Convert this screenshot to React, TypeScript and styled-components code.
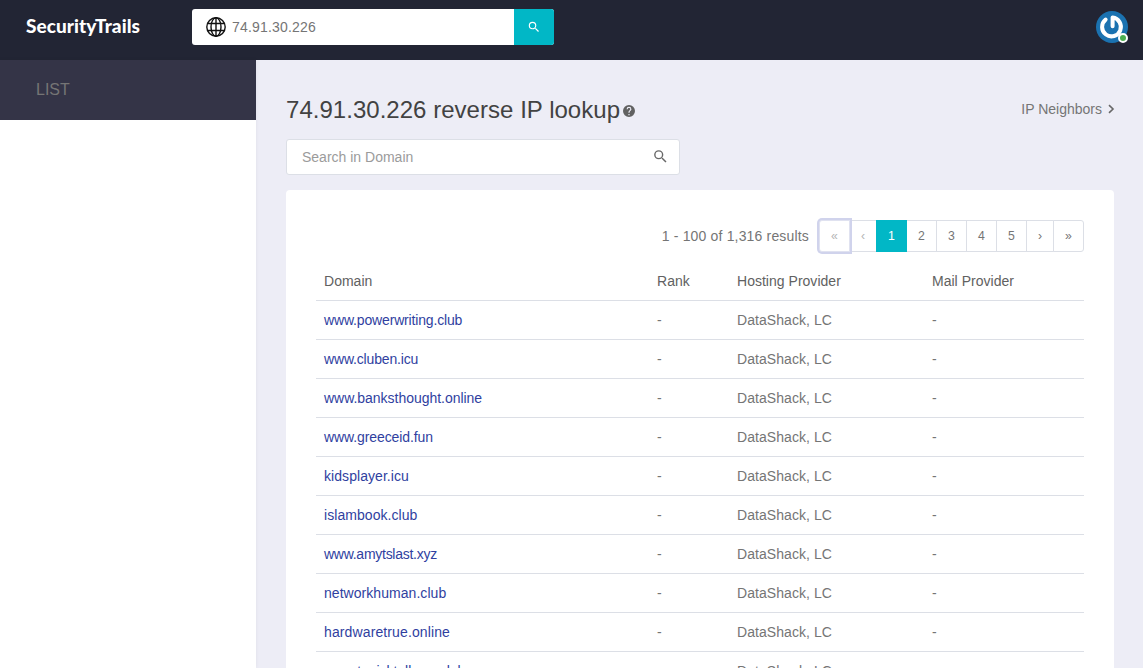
import React from 'react';
import styled, { createGlobalStyle } from 'styled-components';

const Global = createGlobalStyle`
  * { box-sizing: border-box; }
  body {
    margin: 0;
    background: #ededf6;
    color: #757575;
    font: 14px/20px "Liberation Sans", Arial, sans-serif;
  }
`;

const Page = styled.div`
  height: 668px;
  display: flex;
  flex-direction: column;
  overflow: hidden;
`;

const Header = styled.header`
  flex: 0 0 60px;
  display: flex;
  align-items: flex-start;
  padding: 9px 15px 0 26px;
  background: #222534;
`;

const Brand = styled.div`
  width: 166px;
  padding-top: 5px;
  color: #fff;
  font: 900 19px/24px Lato, sans-serif;
  letter-spacing: 0.07px;
`;

const LookupBar = styled.div`
  display: flex;
  width: 362px;
  height: 36px;
  border-radius: 3px;
  overflow: hidden;
  background: #fff;
`;

const LookupField = styled.div`
  flex: 1;
  display: flex;
  align-items: center;
  gap: 6px;
  padding-left: 14px;
  letter-spacing: 0.18px;
`;

const LookupButton = styled.button`
  width: 40px;
  border: 0;
  padding: 0;
  display: flex;
  align-items: center;
  justify-content: center;
  background: #01b7c6;
  color: #fff;
`;

const Avatar = styled.div`
  position: relative;
  width: 32px;
  height: 32px;
  margin: 2px 0 0 auto;
  svg { display: block; }
`;

const Status = styled.span`
  position: absolute;
  right: 0;
  bottom: 0;
  width: 10px;
  height: 10px;
  border: 2px solid #fff;
  border-radius: 50%;
  background: #4caf50;
`;

const Body = styled.div`
  flex: 1;
  min-height: 0;
  display: flex;
`;

const Sidebar = styled.aside`
  flex: 0 0 256px;
  background: #fff;
  box-shadow: 0 0 4px rgba(0, 0, 0, 0.06);
`;

const SideItem = styled.div`
  height: 60px;
  padding: 0 36px;
  background: #343447;
  color: #757575;
  font-size: 16px;
  line-height: 59px;
`;

const Main = styled.main`
  flex: 1;
  display: flex;
  flex-direction: column;
  padding: 34px 29px 0 30px;
`;

const TitleRow = styled.div`
  display: flex;
  flex: 0 0 32px;
  align-items: center;
`;

const Title = styled.h1`
  margin: 0 3px 0 0;
  color: #424242;
  font-size: 24px;
  font-weight: 400;
  line-height: 32px;
  letter-spacing: 0.03px;
`;

const Neighbors = styled.a`
  display: flex;
  align-items: center;
  gap: 6px;
  margin: 0 -1px 2px auto;
`;

const Filter = styled.div`
  display: flex;
  flex: 0 0 36px;
  align-items: center;
  justify-content: space-between;
  width: 394px;
  margin: 13px 0 15px;
  padding: 0 10px 0 15px;
  border: 1px solid #dcdfe6;
  border-radius: 3px;
  background: #fff;
  color: #9b9b9b;
  svg {
    margin-bottom: 1px;
    color: #686868;
  }
`;

const Card = styled.section`
  flex: 1;
  padding: 30px 30px 0;
  border-radius: 4px 4px 0 0;
  background: #fff;
`;

const PagerRow = styled.div`
  display: flex;
  align-items: center;
  justify-content: flex-end;
  gap: 10px;
  height: 32px;
`;

const ResultCount = styled.span`
  letter-spacing: 0.17px;
`;

const Pager = styled.div`
  display: flex;
`;

const PageButton = styled.button<{ $width: number; $state?: 'active' | 'focused' | 'disabled' }>`
  position: relative;
  z-index: ${(p) => (p.$state === 'active' || p.$state === 'focused' ? 1 : 0)};
  width: ${(p) => p.$width}px;
  height: 32px;
  margin-left: -1px;
  padding: 0;
  border: 1px solid ${(p) => (p.$state === 'active' ? '#01b7c6' : '#dcdfe6')};
  border-color: ${(p) => (p.$state === 'focused' ? '#e0e2f0' : undefined)};
  background: ${(p) => (p.$state === 'active' ? '#01b7c6' : '#fff')};
  color: ${(p) =>
    p.$state === 'active' ? '#fff' : p.$state ? '#b5b5b5' : '#757575'};
  box-shadow: ${(p) => (p.$state === 'focused' ? '0 0 0 2px #d0d3ec' : 'none')};
  font: 12.25px/18px "Liberation Sans", Arial, sans-serif;
  &:first-child { border-radius: 3px 0 0 3px; margin-left: 0; }
  &:last-child { border-radius: 0 3px 3px 0; }
`;

const Table = styled.table`
  width: 100%;
  margin-top: 10px;
  table-layout: fixed;
  border-collapse: separate;
  border-spacing: 0;
`;

const Cell = styled.td`
  height: 39px;
  padding: 0 8px;
  border-bottom: 1px solid #dcdfe6;
  letter-spacing: 0.06px;
  white-space: nowrap;
`;

const HeadCell = styled(Cell).attrs({ as: 'th' })<{ $width?: number }>`
  width: ${(p) => (p.$width ? `${p.$width}px` : 'auto')};
  color: #616161;
  font-weight: 400;
  text-align: left;
  letter-spacing: 0.02px;
`;

const DomainLink = styled.a<{ $tracking: number }>`
  color: #303f9f;
  letter-spacing: ${(p) => p.$tracking}px;
`;

const HelpMark = styled.span`
  display: flex;
  padding-top: 2px;
`;

const SearchIcon = ({ size }: { size: number }) => (
  <svg width={size} height={size} viewBox="0 0 24 24" fill="currentColor">
    <path d="M15.5 14h-.79l-.28-.27A6.47 6.47 0 0 0 16 9.5 6.5 6.5 0 1 0 9.5 16c1.61 0 3.09-.59 4.23-1.57l.27.28v.79l5 4.99L20.49 19l-4.99-5zm-6 0a4.5 4.5 0 1 1 0-9 4.5 4.5 0 0 1 0 9z" />
  </svg>
);

const GlobeIcon = () => (
  <svg width="20" height="20" viewBox="0 0 20 20" fill="none" stroke="#111" strokeWidth="1.4">
    <circle cx="10" cy="10" r="9.2" />
    <ellipse cx="10" cy="10" rx="5" ry="9.2" />
    <path d="M10 .8v18.4M1.7 6.5h16.6M1.7 13.5h16.6" />
  </svg>
);

const HelpIcon = () => (
  <svg width="12" height="12" viewBox="0 0 20 20" fill="#616161">
    <path d="M10 0a10 10 0 1 0 0 20 10 10 0 0 0 0-20zm1 17H9v-2h2v2zm2.07-7.75-.9.92C11.45 10.9 11 11.5 11 13H9v-.5c0-1.1.45-2.1 1.17-2.83l1.24-1.26A2 2 0 1 0 8 7H6a4 4 0 1 1 8 0c0 .88-.36 1.68-.93 2.25z" />
  </svg>
);

const ChevronIcon = () => (
  <svg width="7" height="10" viewBox="0 0 7 10" fill="none" stroke="#686868" strokeWidth="1.6">
    <path d="M1 1.2 5 5 1 8.8" />
  </svg>
);

const PowerIcon = () => (
  <svg width="32" height="32" viewBox="0 0 32 32" fill="none">
    <circle cx="16" cy="16" r="16" fill="#1b72b0" />
    <path
      d="M9.6 8.6a9.4 9.4 0 1 0 7-2v8.7"
      stroke="#fff"
      strokeWidth="4"
      strokeLinecap="round"
      strokeLinejoin="round"
    />
  </svg>
);

/* name, letter spacing of the link */
const domains: [string, number][] = [
  ['www.powerwriting.club', -0.16],
  ['www.cluben.icu', -0.17],
  ['www.banksthought.online', -0.03],
  ['www.greeceid.fun', -0.1],
  ['kidsplayer.icu', 0.06],
  ['islambook.club', 0.06],
  ['www.amytslast.xyz', -0.27],
  ['networkhuman.club', 0.05],
  ['hardwaretrue.online', 0.12],
  ['www.topicktellnow.club', -0.05],
];

export default function App() {
  return (
    <Page>
      <Global />
      <Header>
        <Brand>SecurityTrails</Brand>
        <LookupBar>
          <LookupField>
            <GlobeIcon />
            <span>74.91.30.226</span>
          </LookupField>
          <LookupButton>
            <SearchIcon size={14} />
          </LookupButton>
        </LookupBar>
        <Avatar>
          <PowerIcon />
          <Status />
        </Avatar>
      </Header>
      <Body>
        <Sidebar>
          <SideItem>LIST</SideItem>
        </Sidebar>
        <Main>
          <TitleRow>
            <Title>74.91.30.226 reverse IP lookup</Title>
            <HelpMark>
              <HelpIcon />
            </HelpMark>
            <Neighbors>
              IP Neighbors
              <ChevronIcon />
            </Neighbors>
          </TitleRow>
          <Filter>
            Search in Domain
            <SearchIcon size={17} />
          </Filter>
          <Card>
            <PagerRow>
              <ResultCount>1 - 100 of 1,316 results</ResultCount>
              <Pager>
                <PageButton $width={31} $state="focused">«</PageButton>
                <PageButton $width={28} $state="disabled">‹</PageButton>
                <PageButton $width={31} $state="active">1</PageButton>
                <PageButton $width={31}>2</PageButton>
                <PageButton $width={31}>3</PageButton>
                <PageButton $width={31}>4</PageButton>
                <PageButton $width={31}>5</PageButton>
                <PageButton $width={28}>›</PageButton>
                <PageButton $width={31}>»</PageButton>
              </Pager>
            </PagerRow>
            <Table>
              <thead>
                <tr>
                  <HeadCell $width={333}>Domain</HeadCell>
                  <HeadCell $width={80}>Rank</HeadCell>
                  <HeadCell $width={195}>Hosting Provider</HeadCell>
                  <HeadCell>Mail Provider</HeadCell>
                </tr>
              </thead>
              <tbody>
                {domains.map(([domain, tracking]) => (
                  <tr key={domain}>
                    <Cell><DomainLink $tracking={tracking}>{domain}</DomainLink></Cell>
                    <Cell>-</Cell>
                    <Cell>DataShack, LC</Cell>
                    <Cell>-</Cell>
                  </tr>
                ))}
              </tbody>
            </Table>
          </Card>
        </Main>
      </Body>
    </Page>
  );
}
